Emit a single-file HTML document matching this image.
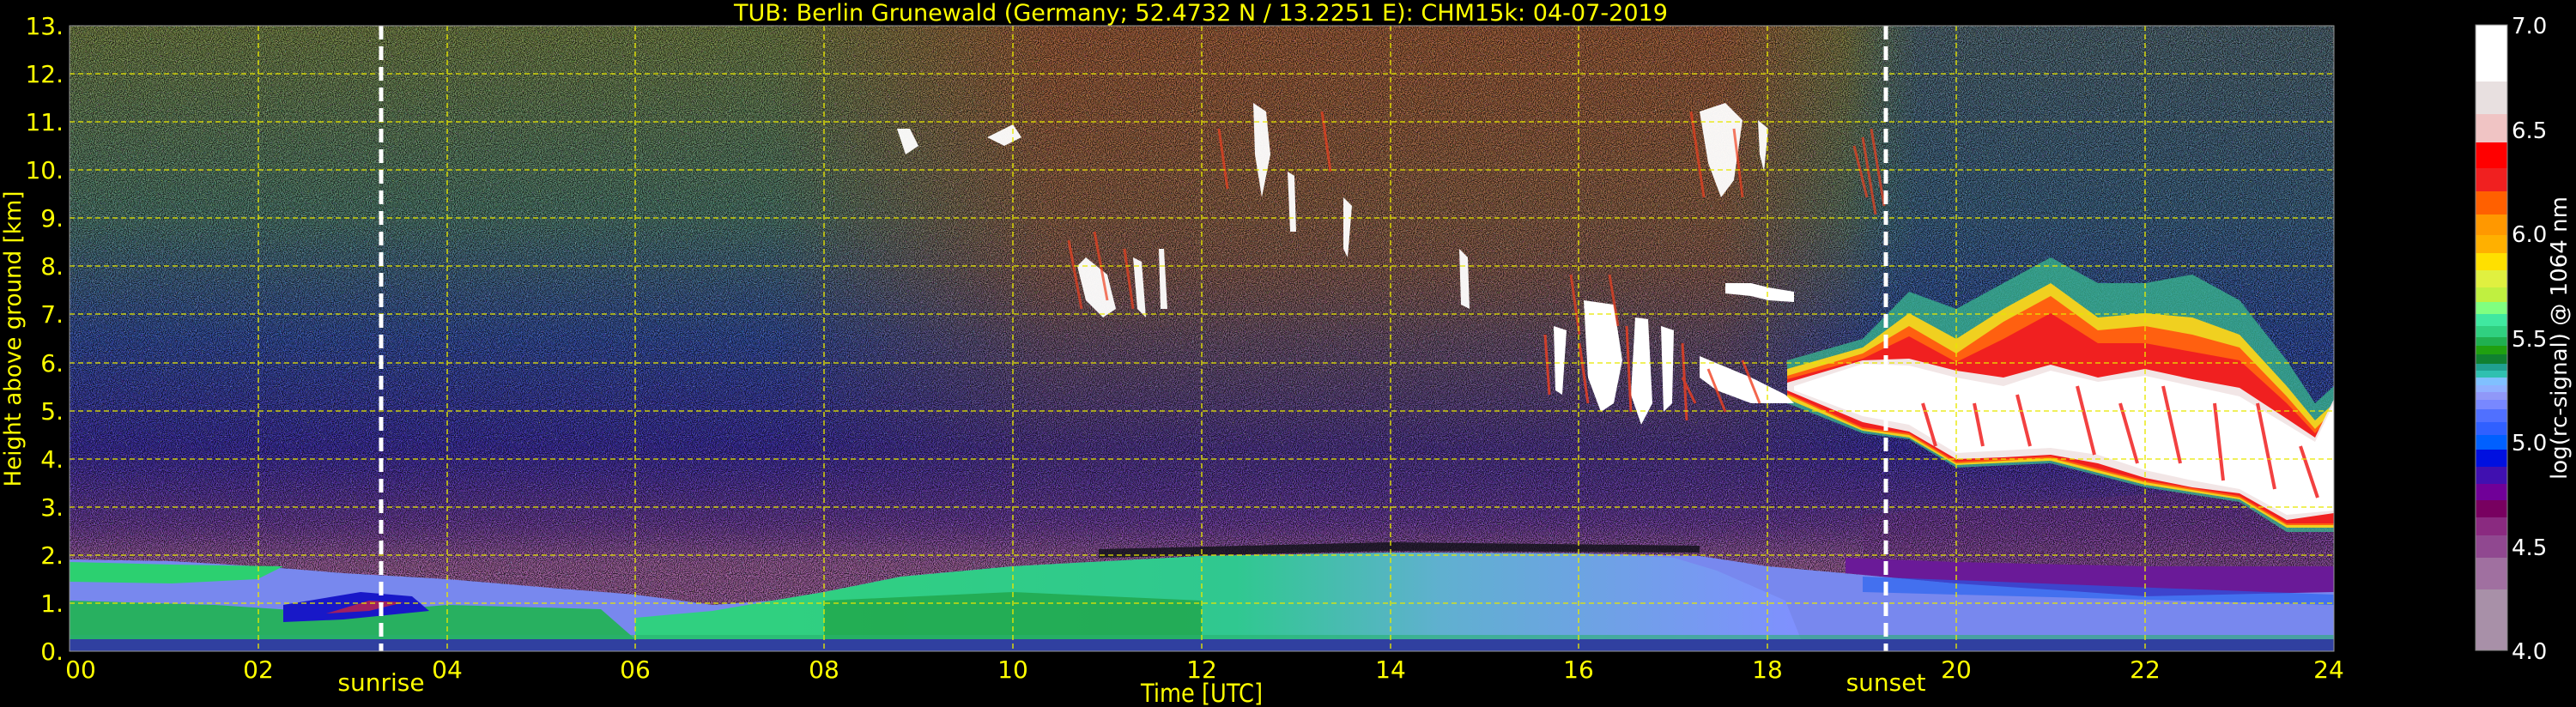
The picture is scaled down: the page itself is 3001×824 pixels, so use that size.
<!DOCTYPE html>
<html><head><meta charset="utf-8"><style>
html,body{margin:0;padding:0;background:#000;}
svg{display:block}
text{font-family:"DejaVu Sans","Liberation Sans",sans-serif}
</style></head><body>
<svg width="3001" height="824" viewBox="0 0 3001 824" xmlns="http://www.w3.org/2000/svg">
<defs>
<linearGradient id="vbase" x1="0" y1="30" x2="0" y2="759" gradientUnits="userSpaceOnUse">
<stop offset="0" stop-color="#7a8a48"/>
<stop offset="0.3" stop-color="#508070"/>
<stop offset="0.5" stop-color="#3450a8"/>
<stop offset="0.68" stop-color="#3e2eaa"/>
<stop offset="0.8" stop-color="#703ea0"/>
<stop offset="0.86" stop-color="#a060a0"/>
<stop offset="1" stop-color="#a060a0"/>
</linearGradient>
<linearGradient id="dayh" x1="900" y1="0" x2="2200" y2="0" gradientUnits="userSpaceOnUse">
<stop offset="0" stop-color="#b05a38" stop-opacity="0"/>
<stop offset="0.25" stop-color="#b05a38" stop-opacity="0.85"/>
<stop offset="0.85" stop-color="#b05a38" stop-opacity="0.85"/>
<stop offset="1" stop-color="#b05a38" stop-opacity="0"/>
</linearGradient>
<linearGradient id="dayv" x1="0" y1="30" x2="0" y2="600" gradientUnits="userSpaceOnUse">
<stop offset="0" stop-color="#fff"/>
<stop offset="0.5" stop-color="#fff" stop-opacity="0.8"/>
<stop offset="1" stop-color="#fff" stop-opacity="0"/>
</linearGradient>
<mask id="daym"><rect x="81" y="30" width="2638" height="600" fill="url(#dayv)"/></mask>
<linearGradient id="nighth" x1="2150" y1="0" x2="2719" y2="0" gradientUnits="userSpaceOnUse">
<stop offset="0" stop-color="#2c50a8" stop-opacity="0"/>
<stop offset="0.15" stop-color="#2c50a8" stop-opacity="0.5"/>
<stop offset="1" stop-color="#2c50a8" stop-opacity="0.5"/>
</linearGradient>
<filter id="nz" x="0" y="0" width="100%" height="100%">
<feTurbulence type="fractalNoise" baseFrequency="0.95" numOctaves="1" seed="3"/>
<feColorMatrix type="matrix" values="0 0 0 0 0  0 0 0 0 0  0 0 0 0 0  4 0 0 0 -1.6"/>
</filter>
<filter id="nz2" x="0" y="0" width="100%" height="100%">
<feTurbulence type="fractalNoise" baseFrequency="0.95" numOctaves="1" seed="11"/>
<feColorMatrix type="matrix" values="4 0 0 0 -1.5  0 4 0 0 -1.5  0 0 4 0 -1.5  0 0 0 5 -2.8"/>
</filter>
<linearGradient id="blday" x1="900" y1="0" x2="2100" y2="0" gradientUnits="userSpaceOnUse">
<stop offset="0" stop-color="#30d080"/>
<stop offset="0.45" stop-color="#30c890"/>
<stop offset="0.65" stop-color="#60b0d0"/>
<stop offset="1" stop-color="#8090ff"/>
</linearGradient>
</defs>

<rect x="81" y="30" width="2638" height="729" fill="url(#vbase)"/>
<rect x="81" y="30" width="2638" height="600" fill="url(#dayh)" mask="url(#daym)"/>
<rect x="2150" y="30" width="569" height="480" fill="url(#nighth)"/>
<polygon points="2170,600 2719,560 2719,700 2170,700" fill="#7a3a9a" opacity="0.5"/>
<rect x="81" y="30" width="2638" height="729" filter="url(#nz2)" opacity="0.55"/>
<rect x="81" y="30" width="2638" height="729" filter="url(#nz)" opacity="0.75"/>

<!-- evening cloud layers -->
<polygon fill="#3ab890" opacity="0.75" points="2082,420 2170,395 2224,340 2279,360 2334,330 2389,300 2444,330 2499,330 2554,320 2609,350 2664,420 2697,470 2719,450 2719,620 2664,620 2609,585 2499,568 2389,540 2279,545 2224,512 2170,505 2082,470"/>
<polygon fill="#f0d020" points="2082,430 2170,405 2224,365 2279,395 2334,360 2389,330 2444,370 2499,365 2554,370 2609,390 2664,450 2697,490 2719,470 2719,615 2664,615 2609,582 2499,565 2389,537 2279,542 2224,510 2170,502 2082,465"/>
<polygon fill="#ff6010" points="2082,438 2170,412 2224,380 2279,412 2334,375 2389,345 2444,385 2499,380 2554,390 2609,405 2664,462 2697,500 2719,478 2719,612 2664,612 2609,580 2499,562 2389,534 2279,540 2224,507 2170,500 2082,460"/>
<polygon fill="#f02020" points="2082,442 2170,418 2224,392 2279,422 2334,395 2389,365 2444,400 2499,400 2554,410 2609,420 2664,470 2697,505 2719,482 2719,610 2664,610 2609,578 2499,560 2389,532 2279,538 2224,505 2170,498 2082,458"/>
<polygon fill="#f2e6e6" points="2082,446 2170,420 2224,418 2279,432 2334,440 2389,425 2444,440 2499,430 2554,442 2609,452 2664,488 2697,510 2719,465 2719,598 2664,606 2609,575 2554,568 2499,557 2444,540 2389,530 2334,533 2279,535 2224,503 2170,492 2082,455"/>
<polygon fill="#ffffff" points="2090,450 2170,424 2224,426 2279,440 2334,450 2389,432 2444,445 2499,438 2554,450 2609,462 2664,495 2697,515 2719,470 2719,595 2664,600 2609,570 2554,560 2499,548 2444,530 2389,522 2334,525 2279,528 2224,495 2170,485 2090,455"/>
<g stroke="#f02020" stroke-width="4" fill="none" opacity="0.85">
<path d="M2240,470 L2255,520 M2300,470 L2310,520 M2350,460 L2365,520 M2420,450 L2440,530 M2470,470 L2490,540 M2520,450 L2540,540 M2580,470 L2590,560 M2630,470 L2650,570 M2680,520 L2700,580"/>
</g>

<g fill="#ffffff">
<polygon points="1845,350 1880,355 1890,420 1880,470 1865,480 1850,440"/>
<polygon points="1905,370 1920,372 1925,470 1912,495 1900,460"/>
<polygon points="1935,380 1950,385 1948,470 1938,480"/>
<polygon points="1810,380 1825,385 1820,460 1812,455"/>
<polygon points="2010,330 2040,330 2060,335 2090,340 2090,352 2060,350 2040,345 2010,342"/>
<polygon points="1980,415 2040,440 2080,460 2090,470 2040,470 2000,455 1980,440"/>
</g>
<g stroke="#f04020" stroke-width="3" fill="none" opacity="0.8">
<path d="M1840,400 L1850,470 M1895,380 L1900,480 M1960,400 L1965,490 M1990,430 L2010,480 M2030,420 L2050,470 M1800,390 L1805,460 M1960,440 L1975,470"/>
</g>
<g fill="#ffffff" opacity="0.95">
<polygon points="1255,310 1265,300 1290,320 1300,360 1285,370 1265,350"/>
<polygon points="1320,300 1330,305 1335,370 1325,360"/>
<polygon points="1350,290 1356,290 1360,360 1352,360"/>
<polygon points="1460,120 1475,130 1480,180 1470,230 1462,180"/>
<polygon points="1500,200 1508,205 1510,270 1503,270"/>
<polygon points="1980,130 2010,120 2030,140 2020,210 2005,230 1990,190"/>
<polygon points="2048,140 2060,150 2055,200 2050,180"/>
<polygon points="1700,290 1710,300 1712,360 1702,355"/>
<polygon points="1565,230 1575,240 1570,300 1565,290"/>
<polygon points="1045,150 1060,150 1070,170 1055,180"/>
<polygon points="1150,160 1180,145 1190,160 1170,170"/>
</g>
<g stroke="#f04020" stroke-width="3" fill="none" opacity="0.7">
<path d="M2170,160 L2185,250 M2180,150 L2195,240 M2160,170 L2175,230 M1245,280 L1260,360 M1275,270 L1290,350 M1310,290 L1320,360 M1970,130 L1985,230 M2020,150 L2030,230 M1830,320 L1840,390 M1875,320 L1885,380 M1420,150 L1430,220 M1540,130 L1550,200"/>
</g>

<!-- boundary layer -->
<polygon fill="#7888ee" points="81,652 200,654 301,660 400,668 521,675 640,685 740,693 830,705 900,700 960,690 1050,672 1180,660 1400,648 1620,644 1839,645 1980,648 2059,660 2170,670 2279,680 2499,690 2719,690 2719,750 81,750"/>
<polygon fill="#2cd070" points="81,655 200,658 330,660 300,675 200,680 81,678"/>
<polygon fill="#28b060" points="81,700 250,705 400,715 521,705 700,710 740,745 81,745"/>
<polygon fill="#1818c8" points="330,705 420,690 480,695 500,712 400,722 330,725"/>
<polygon fill="#a02060" points="380,715 430,700 470,702 430,712"/>
<polygon fill="url(#blday)" points="740,720 830,712 900,700 960,690 1050,672 1180,660 1400,648 1620,644 1839,645 1950,650 2000,665 2080,700 2100,750 740,750"/>
<polygon fill="#1ea040" opacity="0.7" points="960,700 1180,690 1400,700 1400,745 960,745"/>
<polygon fill="#6a1a98" points="2150,668 2279,680 2400,688 2499,695 2719,690 2719,660 2499,660 2279,655 2150,650"/>
<polygon fill="#2060f0" opacity="0.6" points="2170,672 2719,693 2719,705 2170,690"/>
<polygon fill="#101018" opacity="0.8" points="1280,640 1620,632 1980,636 1980,644 1620,642 1280,650"/>
<rect x="81" y="745" width="2638" height="14" fill="#3040a0"/>
<rect x="81" y="740" width="2638" height="5" fill="#28b070" opacity="0.6"/>

<g stroke="#e8e800" stroke-width="1.6" stroke-dasharray="6,4" fill="none" opacity="0.85">
<path d="M81,86H2719M81,142H2719M81,198H2719M81,254H2719M81,310H2719M81,366H2719M81,423H2719M81,479H2719M81,535H2719M81,591H2719M81,647H2719M81,703H2719"/>
<path d="M301,30V759M521,30V759M740,30V759M960,30V759M1180,30V759M1400,30V759M1620,30V759M1839,30V759M2059,30V759M2279,30V759M2499,30V759"/>
</g>
<g stroke="#ffffff" stroke-width="5" stroke-dasharray="16,8">
<path d="M444,30V759M2197,30V759"/>
</g>
<rect x="81" y="30" width="2638" height="729" fill="none" stroke="#999" stroke-width="1"/>

<g fill="#ffff00" font-size="28" text-anchor="end">
<text x="74" y="40">13.</text><text x="74" y="96">12.</text><text x="74" y="152">11.</text>
<text x="74" y="208">10.</text><text x="74" y="264">9.</text><text x="74" y="320">8.</text>
<text x="74" y="376">7.</text><text x="74" y="433">6.</text><text x="74" y="489">5.</text>
<text x="74" y="545">4.</text><text x="74" y="601">3.</text><text x="74" y="657">2.</text>
<text x="74" y="713">1.</text><text x="74" y="769">0.</text>
</g>
<text transform="translate(24,395) rotate(-90)" fill="#ffff00" font-size="27" text-anchor="middle" textLength="345" lengthAdjust="spacingAndGlyphs">Height above ground [km]</text>
<g fill="#ffff00" font-size="28" text-anchor="middle">
<text x="94" y="790">00</text><text x="301" y="790">02</text><text x="521" y="790">04</text>
<text x="740" y="790">06</text><text x="960" y="790">08</text><text x="1180" y="790">10</text>
<text x="1400" y="790">12</text><text x="1620" y="790">14</text><text x="1839" y="790">16</text>
<text x="2059" y="790">18</text><text x="2279" y="790">20</text><text x="2499" y="790">22</text>
<text x="2713" y="790">24</text>
<text x="444" y="805">sunrise</text><text x="2197" y="805">sunset</text>
</g>
<text x="1400" y="818" fill="#ffff00" font-size="29" text-anchor="middle" textLength="142" lengthAdjust="spacingAndGlyphs">Time [UTC]</text>
<text x="1399" y="24" fill="#ffff00" font-size="27" text-anchor="middle" textLength="1088" lengthAdjust="spacingAndGlyphs">TUB: Berlin Grunewald (Germany; 52.4732 N / 13.2251 E):    CHM15k: 04-07-2019</text>

<g>
<rect x="2884" y="29" width="37" height="66" fill="#ffffff"/>
<rect x="2884" y="95" width="37" height="38" fill="#e8e0e0"/>
<rect x="2884" y="133" width="37" height="33" fill="#f0c4c4"/>
<rect x="2884" y="166" width="37" height="30" fill="#ff0000"/>
<rect x="2884" y="196" width="37" height="27" fill="#f02020"/>
<rect x="2884" y="223" width="37" height="27" fill="#ff6000"/>
<rect x="2884" y="250" width="37" height="24" fill="#ff9800"/>
<rect x="2884" y="274" width="37" height="21" fill="#ffb000"/>
<rect x="2884" y="295" width="37" height="20" fill="#ffe000"/>
<rect x="2884" y="315" width="37" height="20" fill="#e0f040"/>
<rect x="2884" y="335" width="37" height="17" fill="#c0f040"/>
<rect x="2884" y="352" width="37" height="14" fill="#80ff80"/>
<rect x="2884" y="366" width="37" height="14" fill="#40e8a0"/>
<rect x="2884" y="380" width="37" height="13" fill="#30d080"/>
<rect x="2884" y="393" width="37" height="10" fill="#20b050"/>
<rect x="2884" y="403" width="37" height="10" fill="#20a010"/>
<rect x="2884" y="413" width="37" height="11" fill="#108030"/>
<rect x="2884" y="424" width="37" height="8" fill="#20a090"/>
<rect x="2884" y="432" width="37" height="8" fill="#30c0b0"/>
<rect x="2884" y="440" width="37" height="9" fill="#80c0ff"/>
<rect x="2884" y="449" width="37" height="8" fill="#90b0ff"/>
<rect x="2884" y="457" width="37" height="9" fill="#9098f8"/>
<rect x="2884" y="466" width="37" height="11" fill="#7888ff"/>
<rect x="2884" y="477" width="37" height="15" fill="#5070ff"/>
<rect x="2884" y="492" width="37" height="15" fill="#3060ff"/>
<rect x="2884" y="507" width="37" height="17" fill="#0060ff"/>
<rect x="2884" y="524" width="37" height="20" fill="#0010e0"/>
<rect x="2884" y="544" width="37" height="20" fill="#4010b0"/>
<rect x="2884" y="564" width="37" height="19" fill="#700098"/>
<rect x="2884" y="583" width="37" height="20" fill="#780060"/>
<rect x="2884" y="603" width="37" height="21" fill="#8a2a80"/>
<rect x="2884" y="624" width="37" height="26" fill="#904890"/>
<rect x="2884" y="650" width="37" height="37" fill="#a070a0"/>
<rect x="2884" y="687" width="37" height="71" fill="#a890a8"/>
<rect x="2884" y="29" width="37" height="729" fill="none" stroke="#888" stroke-width="1"/>
</g>
<g fill="#ffffff" font-size="26">
<text x="2926" y="39">7.0</text><text x="2926" y="161">6.5</text><text x="2926" y="282">6.0</text>
<text x="2926" y="404">5.5</text><text x="2926" y="525">5.0</text><text x="2926" y="647">4.5</text>
<text x="2926" y="768">4.0</text>
</g>
<text transform="translate(2990,394) rotate(-90)" fill="#ffffff" font-size="26" text-anchor="middle" textLength="330" lengthAdjust="spacingAndGlyphs">log(rc-signal) @ 1064 nm</text>
</svg>
</body></html>
